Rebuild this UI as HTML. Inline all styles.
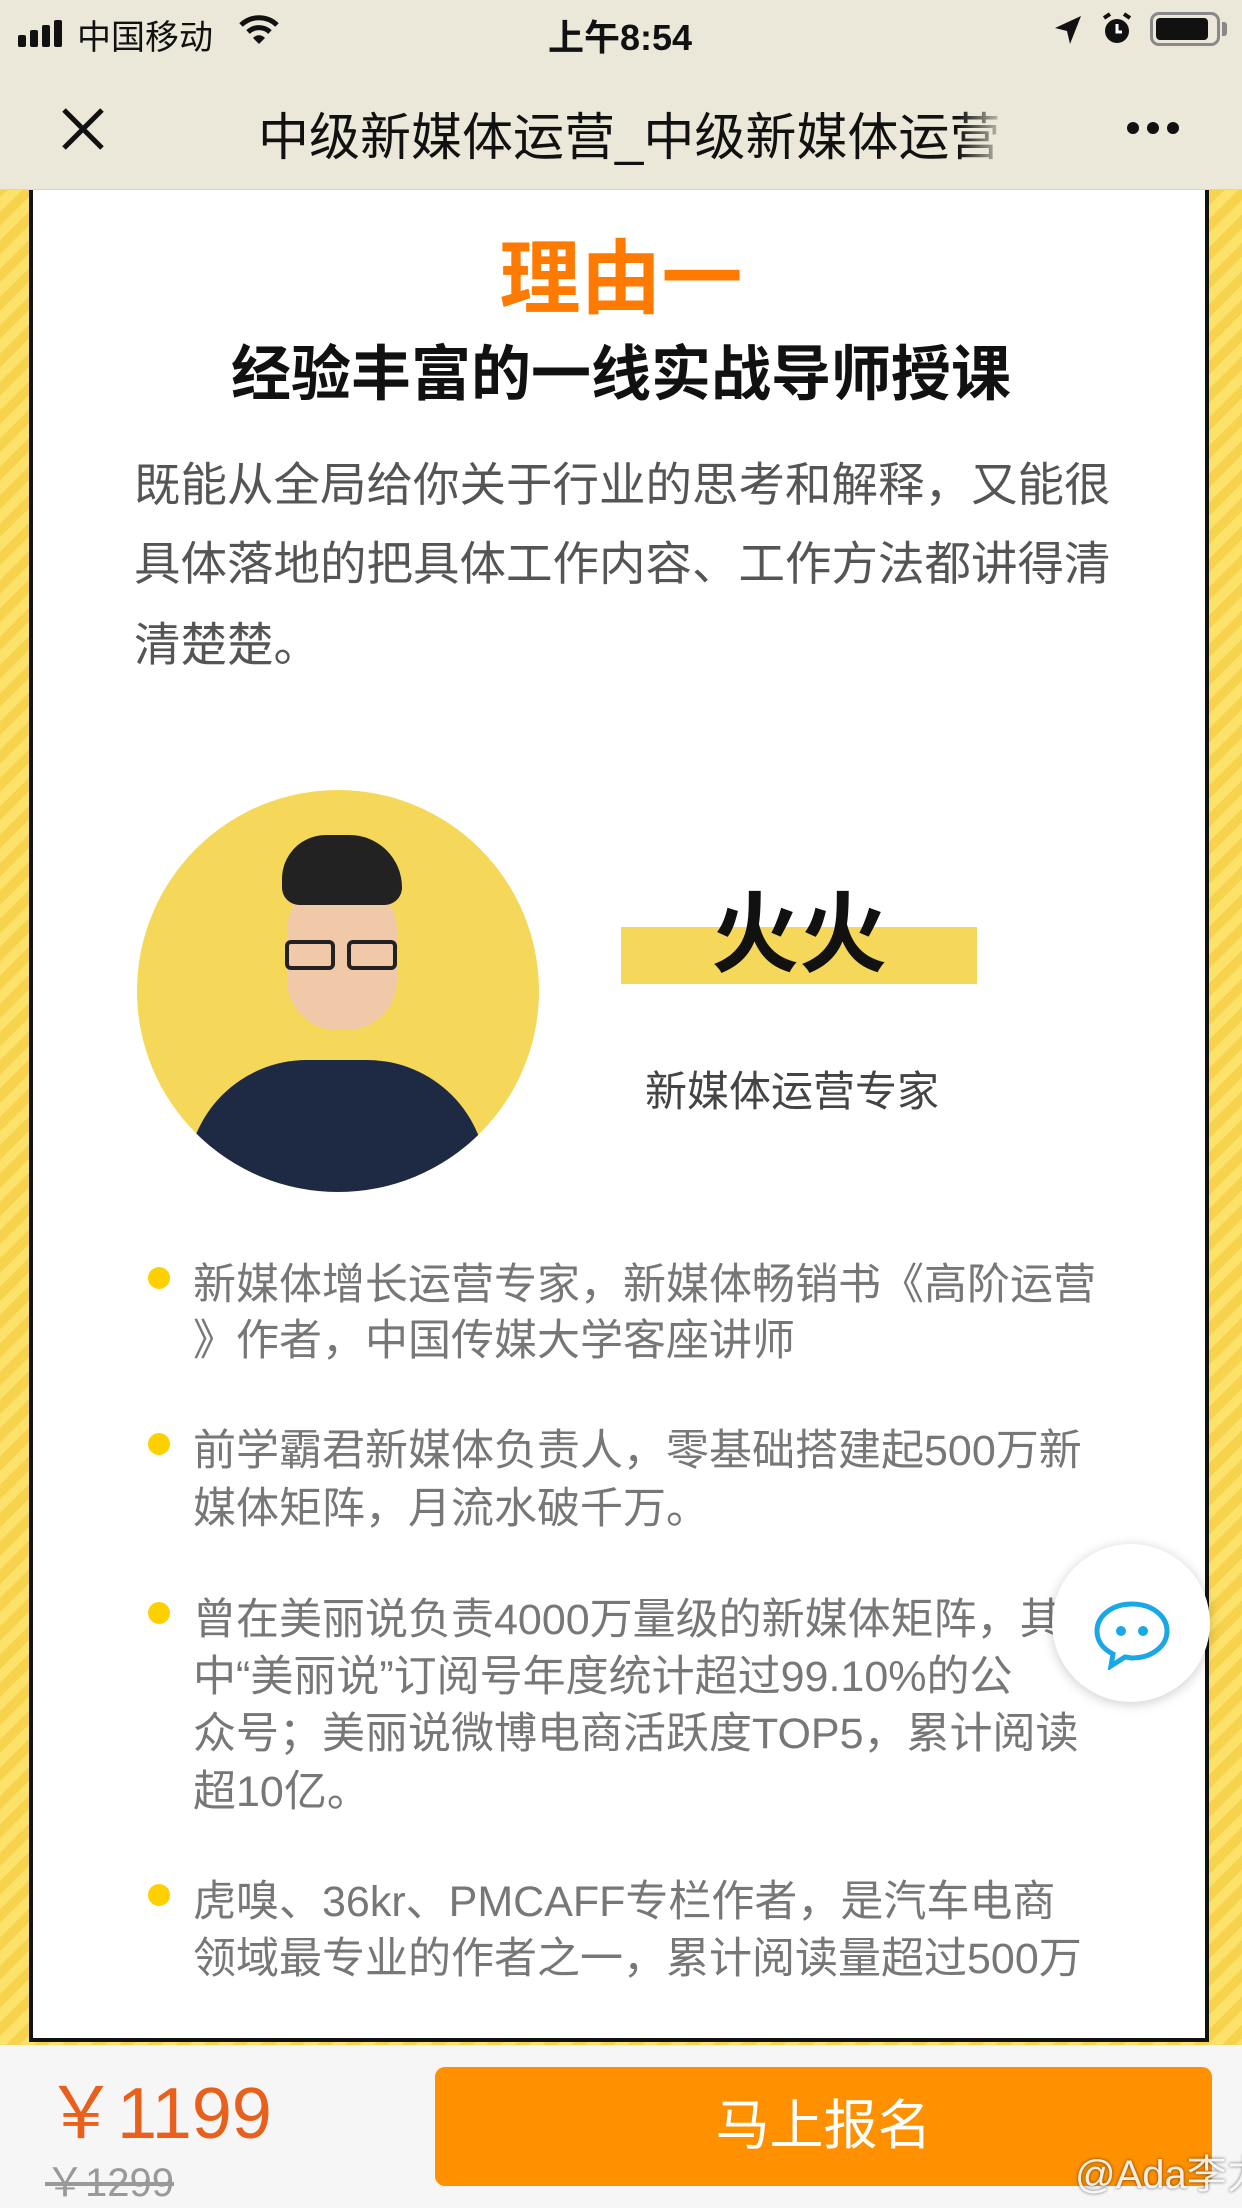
<!DOCTYPE html>
<html><head><meta charset="utf-8"><style>
*{margin:0;padding:0;box-sizing:border-box}
html,body{width:1242px;height:2208px;overflow:hidden}
body{position:relative;font-family:"Liberation Sans","Noto Sans CJK SC",sans-serif;background:repeating-linear-gradient(135deg,#fde26a 0 10px,#f7d24c 10px 20px)}
.abs{position:absolute;white-space:nowrap}
.top{position:absolute;left:0;top:0;width:1242px;height:190px;background:#ebe8da;border-bottom:1px solid #d8d5c8}
.card{position:absolute;left:29px;top:190px;width:1180px;height:1852px;background:#fff;border-left:4px solid #111;border-right:4px solid #111;border-bottom:4px solid #111}
.p{font-size:46.5px;color:#555;left:134px}
.b{font-size:43px;color:#777;left:193px}
.dot{position:absolute;left:148px;width:22px;height:22px;border-radius:50%;background:#ffd000}
</style></head><body>
<div class="top">
 <div class="abs" style="left:18px;top:20px;display:flex;align-items:flex-end;gap:4px">
  <div style="width:8px;height:12px;background:#111;border-radius:2px"></div><div style="width:8px;height:17px;background:#111;border-radius:2px"></div><div style="width:8px;height:22px;background:#111;border-radius:2px"></div><div style="width:8px;height:27px;background:#111;border-radius:2px"></div>
 </div>
 <div class="abs" style="left:77px;top:10px;font-size:34px;color:#111">中国移动</div>
 <svg class="abs" style="left:238px;top:14px" width="42" height="32" viewBox="0 0 42 32"><path d="M3 11a26 26 0 0 1 36 0" stroke="#111" stroke-width="5" fill="none"/><path d="M10 18a16 16 0 0 1 22 0" stroke="#111" stroke-width="5" fill="none"/><path d="M21 30l-6-6a8 8 0 0 1 12 0z" fill="#111"/></svg>
 <div class="abs" style="left:548px;top:9px;font-size:36px;color:#111;font-weight:bold">上午8:54</div>
 <svg class="abs" style="left:1053px;top:14px" width="30" height="32" viewBox="0 0 30 32"><path d="M28 2L2 14l12 3 3 13z" fill="#111"/></svg>
 <svg class="abs" style="left:1100px;top:12px" width="34" height="34" viewBox="0 0 34 34"><circle cx="17" cy="19" r="12" fill="#111"/><path d="M17 12v8h5" stroke="#fff" stroke-width="3" fill="none"/><path d="M4 6l6-4M30 6l-6-4" stroke="#111" stroke-width="4"/></svg>
 <div class="abs" style="left:1150px;top:12px;width:70px;height:34px;border:3px solid #888;border-radius:9px;padding:3px"><div style="width:52px;height:22px;background:#111;border-radius:4px"></div></div>
 <div class="abs" style="left:1222px;top:22px;width:5px;height:14px;background:#888;border-radius:0 3px 3px 0"></div>
 <svg class="abs" style="left:60px;top:106px" width="46" height="46" viewBox="0 0 46 46"><path d="M4 4L42 42M42 4L4 42" stroke="#111" stroke-width="5"/></svg>
 <div class="abs" style="left:258px;top:96px;font-size:51px;color:#111;width:753px;overflow:hidden;-webkit-mask-image:linear-gradient(90deg,#000 93%,transparent)">中级新媒体运营_中级新媒体运营</div>
 <div class="abs" style="left:1127px;top:122px;display:flex;gap:8px"><i style="width:12px;height:12px;border-radius:50%;background:#111;display:block"></i><i style="width:12px;height:12px;border-radius:50%;background:#111;display:block"></i><i style="width:12px;height:12px;border-radius:50%;background:#111;display:block"></i></div>
</div>
<div class="card"></div>
<div class="abs" style="left:0;width:1242px;text-align:center;top:214px;font-size:81px;font-weight:bold;color:#ff7a00">理由一</div>
<div class="abs" style="left:0;width:1242px;text-align:center;top:326px;font-size:60px;font-weight:bold;color:#111">经验丰富的一线实战导师授课</div>
<div class="abs p" style="top:448px">既能从全局给你关于行业的思考和解释，又能很</div>
<div class="abs p" style="top:527px">具体落地的把具体工作内容、工作方法都讲得清</div>
<div class="abs p" style="top:608px">清楚楚。</div>
<div class="abs" style="left:137px;top:790px;width:402px;height:402px;border-radius:50%;background:#f5d85a;overflow:hidden">
 <div style="position:absolute;left:50px;top:270px;width:300px;height:200px;border-radius:120px 120px 0 0;background:#1e2a44"></div>
 <div style="position:absolute;left:150px;top:90px;width:110px;height:150px;border-radius:50px;background:#f0c9a8"></div>
 <div style="position:absolute;left:145px;top:45px;width:120px;height:70px;border-radius:50px 60px 20px 20px;background:#222"></div>
 <div style="position:absolute;left:148px;top:150px;width:50px;height:30px;border:4px solid #222;border-radius:6px"></div>
 <div style="position:absolute;left:210px;top:150px;width:50px;height:30px;border:4px solid #222;border-radius:6px"></div>
</div>
<div class="abs" style="left:621px;top:927px;width:356px;height:57px;background:#f5d85a"></div>
<div class="abs" style="left:621px;width:356px;text-align:center;top:864px;font-size:88px;font-weight:bold;color:#111">火火</div>
<div class="abs" style="left:645px;top:1058px;font-size:42px;color:#444">新媒体运营专家</div>
<div class="dot" style="top:1267px"></div>
<div class="abs b" style="top:1250px">新媒体增长运营专家，新媒体畅销书《高阶运营</div>
<div class="abs b" style="top:1306px">》作者，中国传媒大学客座讲师</div>
<div class="dot" style="top:1433px"></div>
<div class="abs b" style="top:1416px">前学霸君新媒体负责人，零基础搭建起500万新</div>
<div class="abs b" style="top:1474px">媒体矩阵，月流水破千万。</div>
<div class="dot" style="top:1602px"></div>
<div class="abs b" style="top:1585px">曾在美丽说负责4000万量级的新媒体矩阵，其</div>
<div class="abs b" style="top:1642px">中“美丽说”订阅号年度统计超过99.10%的公</div>
<div class="abs b" style="top:1699px">众号；美丽说微博电商活跃度TOP5，累计阅读</div>
<div class="abs b" style="top:1757px">超10亿。</div>
<div class="dot" style="top:1884px"></div>
<div class="abs b" style="top:1867px">虎嗅、36kr、PMCAFF专栏作者，是汽车电商</div>
<div class="abs b" style="top:1924px">领域最专业的作者之一，累计阅读量超过500万</div>
<div class="abs" style="left:1052px;top:1544px;width:158px;height:158px;border-radius:50%;background:#fff;box-shadow:0 2px 12px rgba(0,0,0,.2)"></div>
<svg class="abs" style="left:1092px;top:1600px" width="80" height="70" viewBox="0 0 80 70"><path d="M40 4C20 4 5 16 5 31c0 10 6 18 16 23l-2 12 14-9c2 0 5 1 7 1 20 0 35-12 35-27S60 4 40 4z" fill="none" stroke="#1aa7e8" stroke-width="5"/><circle cx="29" cy="31" r="5" fill="#1aa7e8"/><circle cx="51" cy="31" r="5" fill="#1aa7e8"/></svg>
<div style="position:absolute;left:0;bottom:0;width:1242px;height:163px;background:#f6f6f6"></div>
<div class="abs" style="left:45px;top:2054px;font-size:72px;color:#e8601c">￥1199</div>
<div class="abs" style="left:45px;top:2160px;font-size:40px;line-height:46px;color:#999;text-decoration:line-through">￥1299</div>
<div class="abs" style="left:435px;top:2067px;width:777px;height:119px;border-radius:10px;background:#ff9000;color:#fff;font-size:54px;text-align:center;line-height:119px">马上报名</div>
<div class="abs" style="left:1075px;top:2152px;font-size:40px;line-height:46px;color:rgba(255,255,255,.9);text-shadow:0 0 3px rgba(0,0,0,.6)">@Ada李力</div>
</body></html>
